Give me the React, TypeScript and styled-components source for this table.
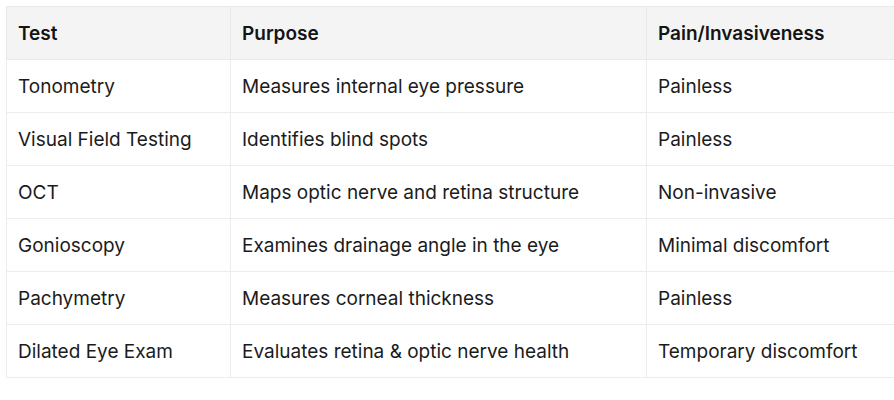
import React from "react";
import styled, { createGlobalStyle } from "styled-components";

const Global = createGlobalStyle`
  html, body { margin: 0; padding: 0; background: #ffffff; }
  body { font-family: Inter, "Noto Sans", sans-serif; color: #1b1b1b; overflow: hidden; }
`;

const Page = styled.div`
  width: 894px;
  height: 400px;
  overflow: hidden;
  padding: 6px 0 0 6px;
  box-sizing: border-box;
`;

const Table = styled.table`
  border-collapse: collapse;
  table-layout: fixed;
  width: 1000px;
  font-size: 19px;
`;

const HeadCell = styled.th<{ $w: number }>`
  width: ${(p) => p.$w}px;
  background: #f4f4f4;
  text-align: left;
  font-weight: 600;
  height: 53px;
  padding: 0 11px;
  box-sizing: border-box;
  border: 1px solid #e9e9e9;
  color: #141414;
`;

const Cell = styled.td`
  height: 53px;
  padding: 0 11px;
  box-sizing: border-box;
  border: 1px solid #ececec;
  font-weight: 400;
  white-space: nowrap;
`;

const rows = [
  ["Tonometry", "Measures internal eye pressure", "Painless"],
  ["Visual Field Testing", "Identifies blind spots", "Painless"],
  ["OCT", "Maps optic nerve and retina structure", "Non-invasive"],
  ["Gonioscopy", "Examines drainage angle in the eye", "Minimal discomfort"],
  ["Pachymetry", "Measures corneal thickness", "Painless"],
  ["Dilated Eye Exam", "Evaluates retina & optic nerve health", "Temporary discomfort"],
];

export default function App() {
  return (
    <Page>
      <Global />
      <Table>
        <thead>
          <tr>
            <HeadCell $w={224}>Test</HeadCell>
            <HeadCell $w={416}>Purpose</HeadCell>
            <HeadCell $w={360}>Pain/Invasiveness</HeadCell>
          </tr>
        </thead>
        <tbody>
          {rows.map((r) => (
            <tr key={r[0]}>
              {r.map((c, i) => (
                <Cell key={i}>{c}</Cell>
              ))}
            </tr>
          ))}
        </tbody>
      </Table>
    </Page>
  );
}
